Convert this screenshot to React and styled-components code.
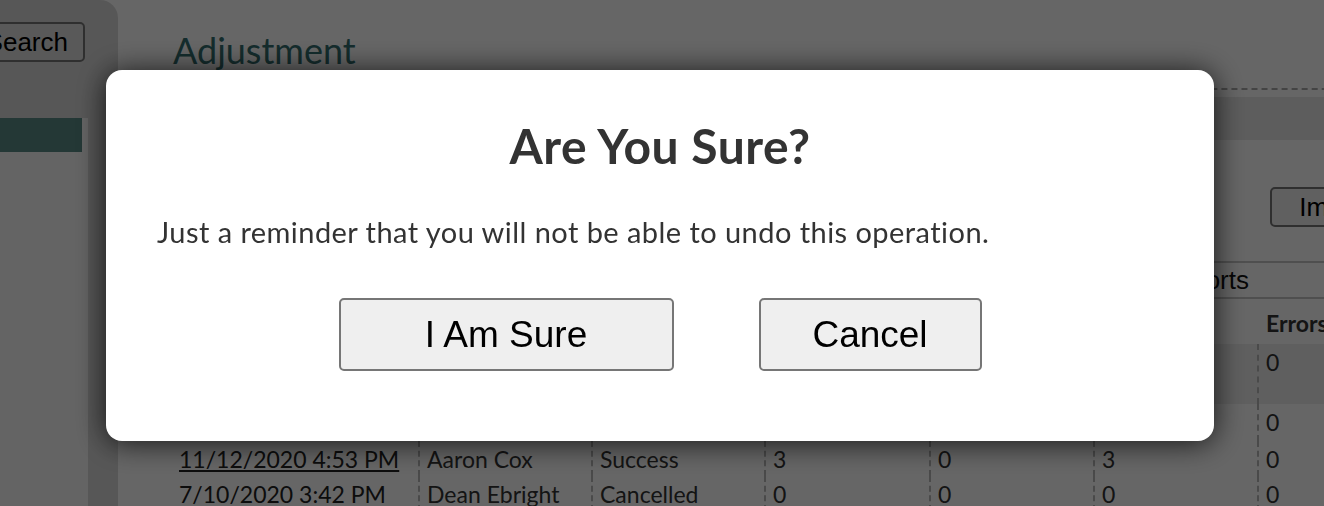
import React from 'react'
import styled, { createGlobalStyle } from 'styled-components'

const GlobalStyle = createGlobalStyle`
    html, body {
        margin: 0;
        padding: 0;
        overflow: hidden;
        background: #ffffff;
    }
    body {
        font-family: Lato, 'DejaVu Sans', sans-serif;
        color: #333333;
    }
`

const COLS = '248px 173px 173px 165px 164px 164px 120px'

const Page = styled.div`
    display: flex;
    width: 100vw;
    height: 100vh;
    overflow: hidden;
`

const Sidebar = styled.aside`
    flex: 0 0 118px;
    display: flex;
    flex-direction: column;
    background: #dadada;
    border-top-right-radius: 18px;
    overflow: hidden;
`

const SearchRow = styled.div`
    flex-shrink: 0;
    display: flex;
    justify-content: flex-end;
    padding: 22px 33px 0 0;
    height: 40px;
`

const PlainButton = styled.button`
    flex-shrink: 0;
    height: 40px;
    padding: 0 ${p => p.$pad || 15}px;
    font-family: 'Liberation Sans', Arial, sans-serif;
    font-size: 26px;
    color: #000000;
    background: ${p => p.$bg || '#efefef'};
    border: 2px solid #767676;
    border-radius: 5px;
`

const Nav = styled.nav`
    margin-top: 56px;
    flex: 1;
    display: flex;
`

const NavList = styled.ul`
    list-style: none;
    margin: 0;
    padding: 0;
    width: 88px;
    background: #fafafa;
`

const NavItem = styled.li`
    height: 34px;
    margin-right: 6px;
    background: ${p => (p.$active ? '#5a8c87' : 'transparent')};
`

const Main = styled.main`
    flex: 0 0 1300px;
    background: #ffffff;
    overflow: hidden;
`

const Header = styled.header`
    height: 90px;
    box-sizing: border-box;
    padding: 29px 0 0 55px;
    border-bottom: 2px dashed #aaaaaa;
`

const Heading = styled.h1`
    margin: 0;
    font-family: Lato, 'DejaVu Sans', sans-serif;
    font-weight: 400;
    font-size: 36px;
    line-height: 1.2;
    color: #336f70;
`

const Band = styled.div`
    margin-top: 7px;
    height: 43px;
    background: #e8e8e8;
`

const ToolRow = styled.div`
    display: flex;
    justify-content: flex-end;
    padding: 47px 16px 34px 0;
`

const TabBar = styled.div`
    display: flex;
    justify-content: flex-end;
    height: 34px;
    padding-right: 169px;
    border-top: 2px solid #c6c6c6;
    border-bottom: 2px solid #c6c6c6;
`

const Tab = styled.span`
    font-family: 'Liberation Sans', Arial, sans-serif;
    font-size: 26px;
    line-height: 34px;
    color: #111111;
`

const Table = styled.div`
    padding-left: 52px;
`

const Row = styled.div`
    display: grid;
    grid-template-columns: ${COLS};
    min-height: ${p => p.$height}px;
`

const Cell = styled.div`
    box-sizing: border-box;
    padding: ${p => (p.$head ? 11 : 5)}px 9px 0;
    border-left: ${p => (p.$divider ? '2px dashed #b8b8b8' : '0')};
    padding-left: ${p => (p.$divider ? 7 : 9)}px;
    background: ${p => (p.$shade ? '#eeeeee' : 'transparent')};
    font-size: 23px;
    font-weight: ${p => (p.$head ? 700 : 400)};
    line-height: 1.2;
    color: #333333;
    white-space: nowrap;
`

const DateLink = styled.a`
    color: #222222;
    text-decoration: ${p => (p.$link ? 'underline' : 'none')};
`

const Overlay = styled.div`
    position: fixed;
    inset: 0;
    box-sizing: border-box;
    display: flex;
    justify-content: center;
    align-items: flex-start;
    padding: 70px 4px 0 0;
    background: rgba(0, 0, 0, 0.6);
`

const Dialog = styled.div`
    width: 1108px;
    box-sizing: border-box;
    padding: 47px 51px 70px;
    background: #ffffff;
    border-radius: 16px;
    box-shadow: 0 2px 30px rgba(0, 0, 0, 0.8);
`

const Title = styled.h2`
    margin: 0;
    text-align: center;
    font-family: Lato, 'DejaVu Sans', sans-serif;
    font-weight: 700;
    font-size: 48px;
    letter-spacing: 0.5px;
    line-height: 1.2;
    color: #333333;
`

const Message = styled.p`
    margin: 40px 0 0;
    font-size: 29px;
    letter-spacing: 0.45px;
    line-height: 1.2;
    color: #333333;
`

const Actions = styled.div`
    display: flex;
    justify-content: center;
    gap: 85px;
    margin-top: 49px;
`

const DialogButton = styled.button`
    width: ${p => p.$width}px;
    height: 73px;
    font-family: 'Liberation Sans', Arial, sans-serif;
    font-size: 37px;
    color: #000000;
    background: #efefef;
    border: 2px solid #767676;
    border-radius: 5px;
`

const headers = ['Date', 'User', 'Status', 'Total', 'Skipped', 'Updated', 'Errors']

const rows = [
    {
        date: '11/16/2020 10:21 AM',
        user: 'Dean Ebright',
        status: 'In Progress',
        values: ['12', '0', '0', '0'],
        shade: true,
        height: 60,
    },
    {
        date: '11/13/2020 2:08 PM',
        user: 'Aaron Cox',
        status: 'Success',
        values: ['5', '0', '5', '0'],
        link: true,
        height: 37,
    },
    {
        date: '11/12/2020 4:53 PM',
        user: 'Aaron Cox',
        status: 'Success',
        values: ['3', '0', '3', '0'],
        link: true,
        height: 35,
    },
    {
        date: '7/10/2020 3:42 PM',
        user: 'Dean Ebright',
        status: 'Cancelled',
        values: ['0', '0', '0', '0'],
        height: 35,
    },
]

const renderRow = (row, i) => {
    const cells = [row.user, row.status, ...row.values]
    return (
        <Row key={i} $height={row.height}>
            <Cell $shade={row.shade}>
                <DateLink href="#" $link={row.link}>
                    {row.date}
                </DateLink>
            </Cell>
            {cells.map((value, j) => (
                <Cell key={j} $divider $shade={row.shade}>
                    {value}
                </Cell>
            ))}
        </Row>
    )
}

export default function App() {
    return (
        <>
            <GlobalStyle />
            <Page>
                <Sidebar>
                    <SearchRow>
                        <PlainButton $bg="#dfdfdf">{'Search'}</PlainButton>
                    </SearchRow>
                    <Nav>
                        <NavList>
                            <NavItem $active />
                            <NavItem />
                            <NavItem />
                        </NavList>
                    </Nav>
                </Sidebar>
                <Main>
                    <Header>
                        <Heading>{'Adjustment'}</Heading>
                    </Header>
                    <Band />
                    <ToolRow>
                        <PlainButton $pad={27}>{'Import'}</PlainButton>
                    </ToolRow>
                    <TabBar>
                        <Tab>{'Reports'}</Tab>
                    </TabBar>
                    <Table>
                        <Row $height={45}>
                            {headers.map(h => (
                                <Cell key={h} $head>
                                    {h}
                                </Cell>
                            ))}
                        </Row>
                        {rows.map(renderRow)}
                    </Table>
                </Main>
            </Page>
            <Overlay>
                <Dialog role="dialog">
                    <Title>{'Are You Sure?'}</Title>
                    <Message>
                        {'Just a reminder that you will not be able to undo this operation.'}
                    </Message>
                    <Actions>
                        <DialogButton $width={335}>{'I Am Sure'}</DialogButton>
                        <DialogButton $width={223}>{'Cancel'}</DialogButton>
                    </Actions>
                </Dialog>
            </Overlay>
        </>
    )
}
